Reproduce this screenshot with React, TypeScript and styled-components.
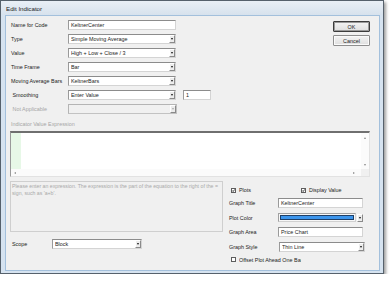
import styled, { createGlobalStyle } from "styled-components";

const GlobalStyle = createGlobalStyle`
  html, body {
    margin: 0;
    padding: 0;
    background: #ffffff;
  }
  body {
    font-family: "Liberation Sans", Arial, sans-serif;
    font-size: 5.4px;
    color: #1c1c1c;
  }
  * {
    box-sizing: border-box;
  }
`;

const Window = styled.div`
  width: 384px;
  height: 274px;
  display: flex;
  flex-direction: column;
  border: 1px solid #56616c;
  background: #d6e3f0;
  padding: 0 3px 2px 4px;
  box-shadow: 2px 2px 3px rgba(0, 0, 0, 0.38);
`;

const TitleBar = styled.div`
  height: 14px;
  flex: none;
  display: flex;
  align-items: center;
  margin: 0 -3px 0 -4px;
  padding-left: 5px;
  font-size: 6.2px;
  color: #1a1a1a;
  background: linear-gradient(#e9eff6, #d7e2ed);
`;

const Client = styled.div`
  flex: 1;
  display: flex;
  flex-direction: column;
  background: #f0f0f0;
  border: 1px solid #a3c0dc;
  padding: 4px 9px 0 4px;
`;

const TopSection = styled.div`
  display: flex;
  align-items: flex-start;
`;

const FormColumn = styled.div`
  display: flex;
  flex-direction: column;
  gap: 4px;
  padding-left: 1px;
`;

const Row = styled.div`
  height: 10px;
  display: flex;
  align-items: center;
`;

const Label = styled.div<{ $w: number; $disabled?: boolean }>`
  width: ${(p) => p.$w}px;
  flex: none;
  white-space: nowrap;
  color: ${(p) => (p.$disabled ? "#a6a6a6" : "#1c1c1c")};
`;

const TextField = styled.div<{ $w: number; $ml?: number }>`
  width: ${(p) => p.$w}px;
  height: 10px;
  margin-left: ${(p) => p.$ml ?? 0}px;
  display: flex;
  align-items: center;
  padding-left: 2px;
  background: #ffffff;
  border: 1px solid #d4d4d4;
  border-top-color: #8c8c8c;
  border-left-color: #9a9a9a;
  white-space: nowrap;
  overflow: hidden;
`;

const ComboBox = styled.div<{ $w: number; $disabled?: boolean }>`
  width: ${(p) => p.$w}px;
  height: 10px;
  display: flex;
  align-items: center;
  padding-left: 2px;
  background: ${(p) => (p.$disabled ? "#f0f0f0" : "#ffffff")};
  border: 1px solid ${(p) => (p.$disabled ? "#c2c2c2" : "#d4d4d4")};
  border-top-color: ${(p) => (p.$disabled ? "#b4b4b4" : "#8c8c8c")};
  border-left-color: ${(p) => (p.$disabled ? "#b4b4b4" : "#9a9a9a")};
  white-space: nowrap;
`;

const ComboText = styled.span`
  flex: 1;
  overflow: hidden;
`;

const DropButton = styled.div<{ $disabled?: boolean }>`
  width: 6px;
  height: 8px;
  flex: none;
  display: flex;
  align-items: center;
  justify-content: center;
  background: #ececec;
  border: 1px solid #ffffff;
  border-right-color: #8a8a8a;
  border-bottom-color: #8a8a8a;

  &::after {
    content: "";
    border-left: 1.5px solid transparent;
    border-right: 1.5px solid transparent;
    border-top: 2px solid ${(p) => (p.$disabled ? "#a8a8a8" : "#111111")};
  }
`;

const ButtonColumn = styled.div`
  margin-left: auto;
  margin-top: 1px;
  display: flex;
  flex-direction: column;
  gap: 3px;
`;

const DialogButton = styled.div<{ $default?: boolean }>`
  width: 37px;
  height: 11px;
  display: flex;
  align-items: center;
  justify-content: center;
  background: linear-gradient(#f4f4f4, #dedede);
  border: 1px solid ${(p) => (p.$default ? "#3c3c3c" : "#8e8e8e")};
  box-shadow: inset 0 0 0 1px ${(p) => (p.$default ? "#9a9a9a" : "#fafafa")};
  border-radius: 1px;
`;

const SectionLabel = styled.div`
  margin-top: 7px;
  padding-left: 1px;
  height: 7px;
  line-height: 7px;
  color: #a6a6a6;
`;

const ExpressionBox = styled.div`
  margin-top: 3px;
  height: 46px;
  display: grid;
  grid-template-columns: 10px 1fr 8px;
  grid-template-rows: 1fr 7px;
  background: #ffffff;
  border: 1px solid #e2e2e2;
  border-top: 2px solid #6f6f6f;
  border-left-color: #9a9a9a;
`;

const Gutter = styled.div`
  background: #e7f8e7;
`;

const VScroll = styled.div`
  display: flex;
  flex-direction: column;
  justify-content: space-between;
  align-items: center;
  padding: 4px 0 3px;
  background: #fbfbfb;
`;

const HScroll = styled.div`
  grid-column: 1 / 3;
  display: flex;
  justify-content: space-between;
  align-items: center;
  padding: 0 6px 0 3px;
  background: #fbfbfb;
`;

const Corner = styled.div`
  background: #f0f0f0;
`;

const Arrow = styled.span<{ $dir: "up" | "down" | "left" | "right" }>`
  width: 0;
  height: 0;
  border: 1.5px solid transparent;
  ${(p) =>
    p.$dir === "up"
      ? "border-bottom: 2px solid #8a8a8a; border-top-width: 0;"
      : p.$dir === "down"
      ? "border-top: 2px solid #8a8a8a; border-bottom-width: 0;"
      : p.$dir === "left"
      ? "border-right: 2px solid #8a8a8a; border-left-width: 0;"
      : "border-left: 2px solid #8a8a8a; border-right-width: 0;"}
`;

const BottomSection = styled.div`
  margin-top: 4px;
  display: flex;
  align-items: flex-start;
  gap: 6px;
`;

const LeftColumn = styled.div`
  width: 213px;
  display: flex;
  flex-direction: column;
`;

const HelpBox = styled.div`
  height: 51px;
  padding: 1px 0 1px 1px;
  border: 1px solid #cfcfcf;
  background: #f0f0f0;
  color: #a9a9a9;
  font-size: 5.2px;
  line-height: 7px;
  white-space: pre;
  overflow: hidden;
`;

const ScopeRow = styled(Row)`
  margin-top: 7px;
  padding-left: 2px;
`;

const PlotPanel = styled.div`
  flex: 1;
  padding-top: 5.5px;
  display: flex;
  flex-direction: column;
  gap: 4.5px;
`;

const CheckRow = styled.div`
  height: 7px;
  display: flex;
  align-items: center;
  padding-left: 2px;
`;

const CheckItem = styled.div<{ $w?: number }>`
  width: ${(p) => (p.$w ? `${p.$w}px` : "auto")};
  display: flex;
  align-items: center;
  gap: 3px;
  white-space: nowrap;
`;

const CheckBox = styled.span`
  width: 5px;
  height: 5px;
  flex: none;
  display: flex;
  background: #ffffff;
  border: 1px solid #5e5e5e;
`;

const ClippedText = styled.span<{ $w: number }>`
  width: ${(p) => p.$w}px;
  overflow: hidden;
  white-space: nowrap;
`;

const ColorPicker = styled.div`
  width: 85px;
  height: 10px;
  display: flex;
  align-items: center;
  gap: 1px;
`;

const ColorWell = styled.div`
  flex: 1;
  height: 9px;
  padding: 1px;
  background: #f7f7f7;
  border: 1px solid #d0d0d0;
  border-top-color: #a0a0a0;
  border-left-color: #a0a0a0;
`;

const Swatch = styled.div`
  height: 100%;
  background: #3c95ec;
  border: 1px solid #1f3f66;
`;

const Check = ({ on }: { on?: boolean }) => (
  <CheckBox>
    {on && (
      <svg width="3" height="3" viewBox="0 0 6 6">
        <polyline points="0.5,3 2.3,5 5.5,0.8" fill="none" stroke="#111" strokeWidth="1.6" />
      </svg>
    )}
  </CheckBox>
);

const Combo = ({ w, value, disabled }: { w: number; value?: string; disabled?: boolean }) => (
  <ComboBox $w={w} $disabled={disabled}>
    <ComboText>{value}</ComboText>
    <DropButton $disabled={disabled} />
  </ComboBox>
);

const formRows = [
  { label: "Type", value: "Simple Moving Average" },
  { label: "Value", value: "High + Low + Close / 3" },
  { label: "Time Frame", value: "Bar" },
  { label: "Moving Average Bars", value: "KeltnerBars" },
];

export default function App() {
  return (
    <>
      <GlobalStyle />
      <Window>
        <TitleBar>Edit Indicator</TitleBar>
        <Client>
          <TopSection>
            <FormColumn>
              <Row>
                <Label $w={57}>Name for Code</Label>
                <TextField $w={108}>KeltnerCenter</TextField>
              </Row>
              {formRows.map((r) => (
                <Row key={r.label}>
                  <Label $w={57}>{r.label}</Label>
                  <Combo w={108} value={r.value} />
                </Row>
              ))}
              <Row>
                <Label $w={57}>&nbsp;Smoothing</Label>
                <Combo w={108} value="Enter Value" />
                <TextField $w={28} $ml={7}>1</TextField>
              </Row>
              <Row>
                <Label $w={57} $disabled>&nbsp;Not Applicable</Label>
                <Combo w={109} disabled />
              </Row>
            </FormColumn>
            <ButtonColumn>
              <DialogButton $default>OK</DialogButton>
              <DialogButton>Cancel</DialogButton>
            </ButtonColumn>
          </TopSection>

          <SectionLabel>Indicator Value Expression</SectionLabel>
          <ExpressionBox>
            <Gutter />
            <div />
            <VScroll>
              <Arrow $dir="up" />
              <Arrow $dir="down" />
            </VScroll>
            <HScroll>
              <Arrow $dir="left" />
              <Arrow $dir="right" />
            </HScroll>
            <Corner />
          </ExpressionBox>

          <BottomSection>
            <LeftColumn>
              <HelpBox>
                {"Please enter an expression. The expression is the part of the equation to the right of the =\nsign, such as 'a+b'."}
              </HelpBox>
              <ScopeRow>
                <Label $w={40}>Scope</Label>
                <Combo w={90} value="Block" />
              </ScopeRow>
            </LeftColumn>

            <PlotPanel>
              <CheckRow>
                <CheckItem $w={70}>
                  <Check on />
                  Plots
                </CheckItem>
                <CheckItem>
                  <Check on />
                  Display Value
                </CheckItem>
              </CheckRow>
              <Row>
                <Label $w={49}>Graph Title</Label>
                <TextField $w={85}>KeltnerCenter</TextField>
              </Row>
              <Row>
                <Label $w={49}>Plot Color</Label>
                <ColorPicker>
                  <ColorWell>
                    <Swatch />
                  </ColorWell>
                  <DropButton />
                </ColorPicker>
              </Row>
              <Row>
                <Label $w={49}>Graph Area</Label>
                <TextField $w={85}>Price Chart</TextField>
              </Row>
              <Row>
                <Label $w={50}>Graph Style</Label>
                <Combo w={86} value="Thin Line" />
              </Row>
              <CheckRow>
                <CheckItem>
                  <Check />
                  <ClippedText $w={62}>Offset Plot Ahead One Bar</ClippedText>
                </CheckItem>
              </CheckRow>
            </PlotPanel>
          </BottomSection>
        </Client>
      </Window>
    </>
  );
}
